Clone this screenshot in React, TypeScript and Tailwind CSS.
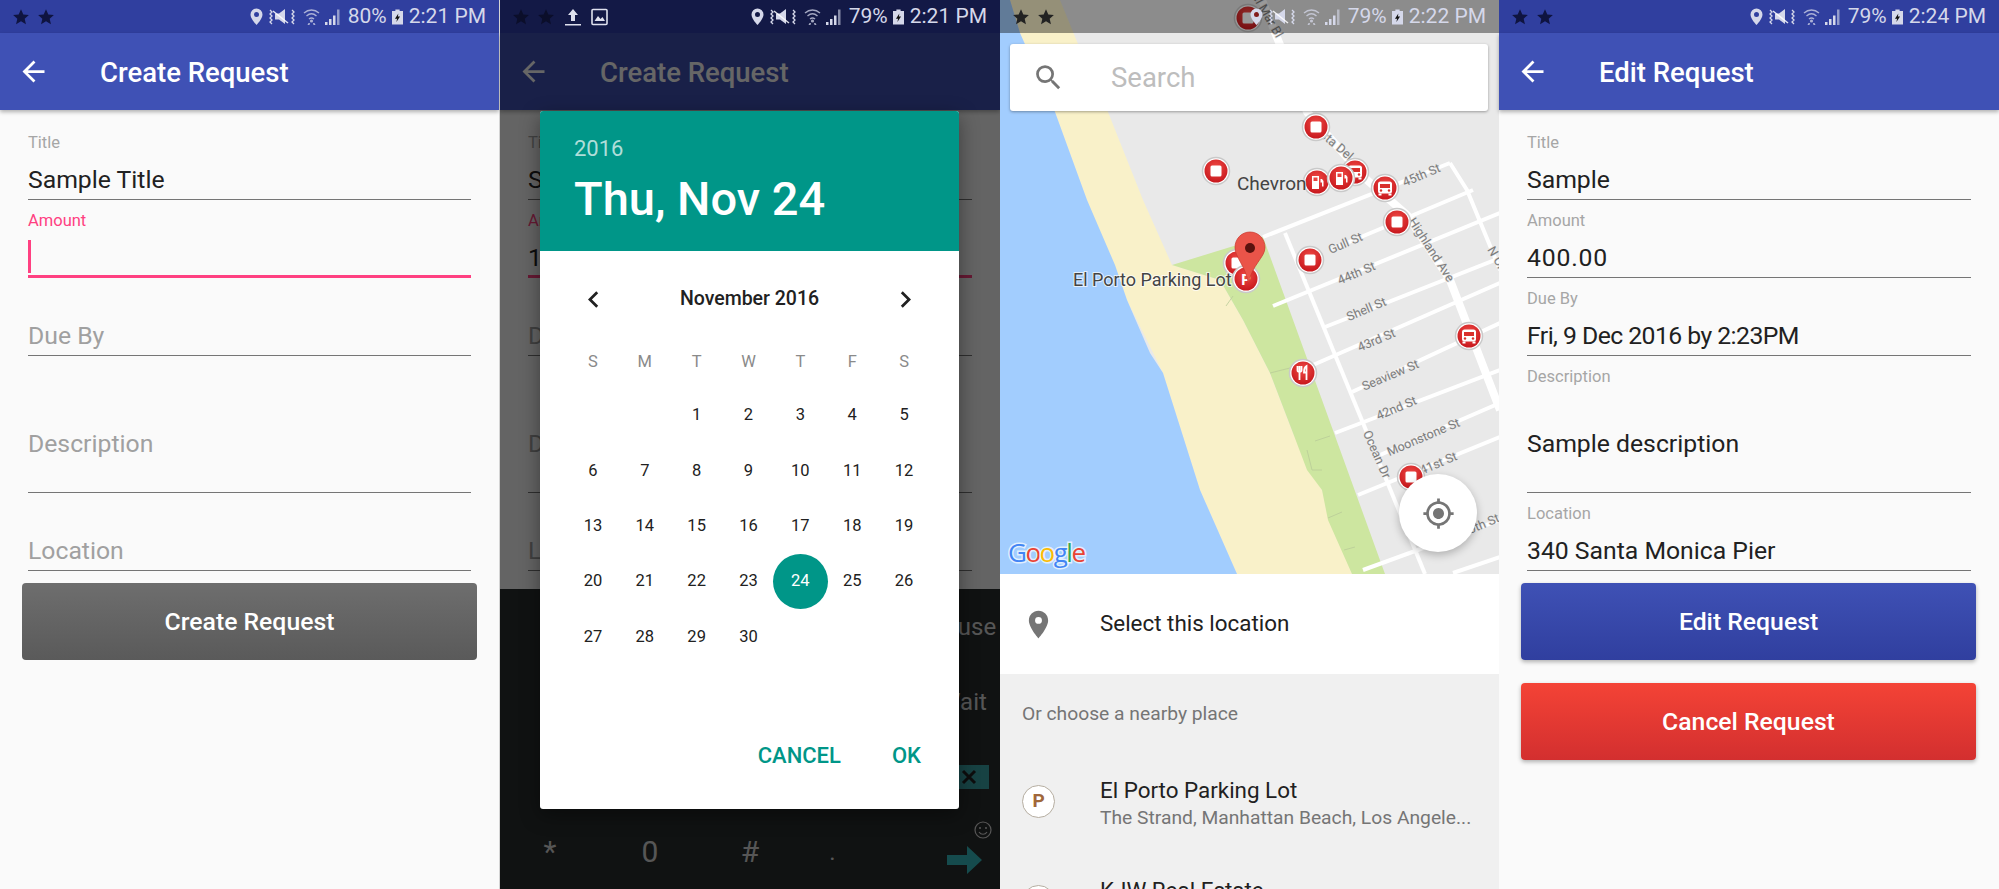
import React from 'react';

type FieldProps = { label: string; value?: string; tall?: boolean; focused?: boolean; valueClass?: string };

function Star() {
  return (
    <svg width="18" height="18" viewBox="0 0 24 24" fill="currentColor">
      <path d="M12 1.5l3.1 7 7.4.7-5.6 5 1.7 7.5-6.6-4-6.6 4 1.7-7.5-5.6-5 7.4-.7z" />
    </svg>
  );
}

function StatusIcons() {
  return (
    <svg width="92" height="33" viewBox="0 0 92 33" fill="currentColor" stroke="none">
      {/* location */}
      <path fillRule="evenodd" d="M6.5 8.5a6 6 0 0 0-6 6c0 4.5 6 10.5 6 10.5s6-6 6-10.500a6 6 0 0 0-6-6zm0 3.500a2.500 2.500 0 1 1 0 5 2.500 2.500 0 0 1 0-5z" />
      {/* vibrate off */}
      <path d="M25 13.500h4l6-4.500v15l-6-4.500h-4z" />
      <path d="M23 11l15 12" stroke="#fff" strokeOpacity="0.85" strokeWidth="1.500" />
      <path d="M20 10l2 2-2 2 2 2-2 2 2 2-2 2 2 2M42 10l2 2-2 2 2 2-2 2 2 2-2 2 2 2" fill="none" stroke="currentColor" strokeWidth="1.300" />
      {/* wifi */}
      <g fill="none" stroke="currentColor" strokeWidth="1.400" opacity="0.75">
        <path d="M54 13c4.500-4 10.500-4 15 0" />
        <path d="M56.500 16c3-2.600 7-2.600 10 0" />
        <path d="M59 19c1.600-1.300 3.400-1.300 5 0" />
      </g>
      <circle cx="61.500" cy="21" r="1.600" opacity="0.75" />
      <path d="M57.500 25l1-2h1.500l-.5 2zM65.500 25l-1-2H63l.5 2z" opacity="0.75" />
      {/* signal */}
      <path d="M75 22h2.500v3H75zM79 19h2.500v6H79zM83 15.500h2.500V25H83z" />
      <path d="M87 9.500h2.500V25H87z" opacity="0.6" />
    </svg>
  );
}

function Battery() {
  return (
    <svg width="11" height="18" viewBox="0 0 13 18">
      <path d="M4 0h5v2h4v16H0V2h4z" fill="currentColor" />
      <path d="M7.500 5L3.500 11h2.500l-.8 4 4.300-6.500H7z" fill="#111" />
    </svg>
  );
}

function StatusBar({ time, battery, bg, starColor, extras }: { time: string; battery: string; bg: string; starColor: string; extras?: boolean }) {
  return (
    <div className={`h-[33px] shrink-0 flex items-center justify-between pl-[12px] pr-[13px] text-[#d5d8ea] text-[21px] ${bg}`}>
      <div className="flex items-center gap-[8px]">
        <span className={`flex gap-[7px] ${starColor}`}>
          <Star />
          <Star />
        </span>
        {extras && (
          <>
            <svg width="20" height="18" viewBox="0 0 20 18" fill="#dfe1ee">
              <path d="M10 1l5 6h-3v6H8V7H5zM2 16h16v1.500H2z" />
            </svg>
            <svg width="17" height="18" viewBox="0 0 17 18">
              <rect x="1" y="1.500" width="15" height="15" rx="1" fill="none" stroke="#dfe1ee" strokeWidth="1.600" />
              <path d="M3.500 13l3.500-5 2.500 3 2-2 2.500 4z" fill="#dfe1ee" />
            </svg>
          </>
        )}
      </div>
      <div className="flex items-center">
        <StatusIcons />
        <span className="ml-[6px] leading-none">{battery}</span>
        <span className="ml-[5px] flex"><Battery /></span>
        <span className="ml-[6px] leading-none">{time}</span>
      </div>
    </div>
  );
}

function AppBar({ title }: { title: string }) {
  return (
    <div className="relative z-[5] h-[77px] shrink-0 bg-[#3f51b5] shadow-[0_2px_4px_rgba(0,0,0,0.3)] flex items-center text-white">
      <svg className="ml-[17px]" width="33" height="33" viewBox="0 0 24 24" fill="currentColor">
        <path d="M20 11H7.830l5.590-5.590L12 4l-8 8 8 8 1.410-1.410L7.830 13H20v-2z" />
      </svg>
      <span className="ml-[50px] pt-[3px] text-[27.5px] font-medium leading-none">{title}</span>
    </div>
  );
}

function Field({ label, value, tall, focused, valueClass }: FieldProps) {
  const lineColor = focused ? 'border-b-[3px] border-[#ff4081]' : 'border-b-[1.5px] border-[#757575]';
  return (
    <div className={`mx-[28px] flex flex-col ${tall ? 'h-[137px]' : 'h-[78px]'} ${lineColor}`}>
      {value !== undefined || focused ? (
        <>
          <div className={`mt-[12px] h-[18px] text-[16.5px] leading-[18px] ${focused ? 'text-[#ff4081]' : 'text-[#a6a6a6]'}`}>{label}</div>
          <div className={`${tall ? 'mt-[43px]' : 'mt-[13px]'} h-[30px] text-[24.75px] leading-[30px] text-[#212121] ${valueClass ?? ''}`}>
            {value}
            {focused && !value && <div className="-mt-[3px] w-[2.500px] h-[33px] bg-[#ff4081]" />}
          </div>
        </>
      ) : (
        <div className={`${tall ? 'mt-[73px]' : 'mt-[43px]'} h-[30px] text-[24.75px] leading-[30px] text-[#a0a0a0]`}>{label}</div>
      )}
    </div>
  );
}

function ActionButton({ label, gradient }: { label: string; gradient: string }) {
  return (
    <button className={`mx-[22px] w-[455px] h-[77px] rounded-[4px] text-white text-[24.75px] font-medium ${gradient}`}>
      {label}
    </button>
  );
}

function KeyLabel({ children }: { children: React.ReactNode }) {
  return <div className="flex-1 flex justify-end items-center"><span className="w-[74px] text-center text-[24px] text-[#d8d8d8]">{children}</span></div>;
}

function Keyboard() {
  return (
    <div className="h-[300px] shrink-0 bg-[#2a2d2d] flex flex-col">
      <KeyLabel>Pause</KeyLabel>
      <KeyLabel>Wait</KeyLabel>
      <div className="flex-1 flex justify-end items-center pr-[11px]">
        <div className="w-[46px] h-[24px] bg-[#3aa5a8] flex items-center justify-center pl-[6px] text-[#222]">
          <svg width="16" height="16" viewBox="0 0 16 16" fill="none" stroke="currentColor" strokeWidth="3">
            <path d="M2 2l12 12M14 2L2 14" />
          </svg>
        </div>
      </div>
      <div className="flex-1 grid grid-cols-[100px_100px_100px_65px_70px_65px] items-center text-center text-[#d8d8d8]">
        <span className="text-[30px]">*</span>
        <span className="text-[30px]">0</span>
        <span className="text-[30px]">#</span>
        <span className="text-[24px]">.</span>
        <span />
        <svg width="65" height="75" viewBox="0 0 65 75">
          <circle cx="48" cy="16" r="8" fill="none" stroke="#d8d8d8" strokeWidth="1.200" />
          <circle cx="45" cy="14" r="1" fill="#d8d8d8" />
          <circle cx="51" cy="14" r="1" fill="#d8d8d8" />
          <path d="M44 18c2 3 6 3 8 0" fill="none" stroke="#d8d8d8" strokeWidth="1.200" />
          <path d="M12 41h20v-9l15 14-15 14v-9H12z" fill="#35bcc0" />
        </svg>
      </div>
    </div>
  );
}

const DAY_NAMES = ['S', 'M', 'T', 'W', 'T', 'F', 'S'];
const DAYS = Array.from({ length: 30 }, (_, i) => i + 1);

function DatePicker() {
  return (
    <div className="absolute z-30 left-[40px] top-[111px] w-[419px] h-[698px] bg-white rounded-[3px] flex flex-col shadow-[0_6px_20px_rgba(0,0,0,0.4)]">
      <div className="h-[140px] bg-[#009688] rounded-t-[3px] pl-[34px] pt-[24px] text-white">
        <div className="text-[22px] leading-[28px] text-white/70">2016</div>
        <div className="mt-[7px] text-[47px] leading-[58px] font-medium">Thu, Nov 24</div>
      </div>
      <div className="ml-[27px] w-[363px]">
        <div className="h-[96px] pl-[10px] pr-[8px] flex items-center justify-between text-[#212121]">
          <svg width="33" height="33" viewBox="0 0 24 24" fill="currentColor"><path d="M15.410 7.410L14 6l-6 6 6 6 1.410-1.410L10.830 12z" /></svg>
          <span className="text-[19.500px] font-medium">November 2016</span>
          <svg width="33" height="33" viewBox="0 0 24 24" fill="currentColor"><path d="M10 6L8.590 7.410 13.170 12l-4.580 4.590L10 18l6-6z" /></svg>
        </div>
        <div className="grid grid-cols-7 h-[30px] items-center text-center text-[16.500px] text-[#8a8a8a]">
          {DAY_NAMES.map((d, i) => <span key={i}>{d}</span>)}
        </div>
        <div className="mt-[11px] grid grid-cols-7 auto-rows-[55.400px] text-[16.500px] text-[#212121]">
          <span />
          <span />
          {DAYS.map((d) => (
            <div key={d} className="flex items-center justify-center">
              {d === 24 ? (
                <span className="shrink-0 w-[55px] h-[55px] rounded-full bg-[#009688] text-white flex items-center justify-center">{d}</span>
              ) : d}
            </div>
          ))}
        </div>
      </div>
      <div className="mt-auto h-[108px] pr-[38px] flex items-center justify-end gap-[51px] text-[22px] font-medium text-[#009688]">
        <span>CANCEL</span>
        <span>OK</span>
      </div>
    </div>
  );
}

function Marker({ x, y, kind }: { x: number; y: number; kind: 'stop' | 'gas' | 'bus' | 'fork' | 'park' }) {
  return (
    <g transform={`translate(${x} ${y})`}>
      <circle r="13.500" fill="#fff" stroke="#c9c9c9" strokeWidth="1.500" />
      <circle r="11.500" fill="url(#pinRed)" />
      {kind === 'stop' && <rect x="-5.500" y="-5.500" width="11" height="11" rx="1.500" fill="#fff" />}
      {kind === 'gas' && (
        <g fill="#fff">
          <path d="M-5-6h7v13h-7zM-3.500-4.500v3.500h4v-3.500z" fillRule="evenodd" />
          <path d="M3.500-3h1.500l1.500 2v5.500h-1.500v-4h-1.500z" />
        </g>
      )}
      {kind === 'bus' && (
        <g>
          <rect x="-7" y="-6.500" width="14" height="12" rx="2.500" fill="#fff" />
          <rect x="-5" y="-4" width="10" height="4" fill="#d9302c" />
          <circle cx="-4" cy="2.500" r="1.200" fill="#d9302c" />
          <circle cx="4" cy="2.500" r="1.200" fill="#d9302c" />
          <path d="M-6.500 5.500h3v2h-3zM3.500 5.500h3v2h-3z" fill="#fff" />
        </g>
      )}
      {kind === 'fork' && (
        <g fill="none" stroke="#fff" strokeWidth="1.800">
          <path d="M-3.500-7v14M-5.500-7v4.500c0 1 1 1.500 2 1.500s2-.5 2-1.500V-7" />
          <path d="M3.500 7V-7c-2 1-2.500 3.500-2.500 6.500h2.500" />
        </g>
      )}
      {kind === 'park' && <text x="0" y="5.500" textAnchor="middle" fontSize="15" fontWeight="700" fill="#fff">P</text>}
    </g>
  );
}

const STREETS = [
  'M263 237L450 163',
  'M330 250L473 190',
  'M273 306L500 213',
  'M325 327L500 258',
  'M313 365L500 283',
  'M352 392L500 323',
  'M335 433L500 370',
  'M380 455L500 403',
  'M358 495L500 437',
  'M363 570L500 520',
  'M453 573L500 557',
];

const STREET_LABELS = [
  { t: '45th St', x: 423, y: 179, r: -23 },
  { t: 'Gull St', x: 347, y: 247, r: -23 },
  { t: '44th St', x: 358, y: 277, r: -23 },
  { t: 'Shell St', x: 368, y: 313, r: -23 },
  { t: '43rd St', x: 378, y: 344, r: -23 },
  { t: 'Seaview St', x: 392, y: 379, r: -23 },
  { t: '42nd St', x: 398, y: 412, r: -23 },
  { t: 'Moonstone St', x: 425, y: 441, r: -23 },
  { t: '41st St', x: 440, y: 467, r: -23 },
  { t: '40th St', x: 482, y: 529, r: -23 },
  { t: 'Highland Ave', x: 428, y: 252, r: 57 },
  { t: 'Ocean Dr', x: 373, y: 456, r: 66 },
  { t: 'Vista Del', x: 330, y: 145, r: 40 },
  { t: 'Del Mar Bl', x: 262, y: 14, r: 60 },
  { t: 'N Cr', x: 493, y: 260, r: 60 },
];

function MapCanvas() {
  return (
    <svg className="block [font-family:Roboto,sans-serif]" width="499" height="574" viewBox="0 0 499 574">
      <defs>
        <radialGradient id="pinRed" cx="50%" cy="35%" r="70%">
          <stop offset="0%" stopColor="#f04a45" />
          <stop offset="100%" stopColor="#c4141a" />
        </radialGradient>
      </defs>
      <rect width="500" height="574" fill="#e9e9e9" />
      <path d="M0 0H60L78 44 108 112 143 200 172 265 220 280 243 320 270 373 293 433 322 490 352 574H237L200 490 163 373 127 300 87 200 55 112 20 33 10 0Z" fill="#f9f1c9" />
      <path d="M0 0H10L20 33 55 112 87 200 115 265 127 300 150 353 163 373 200 490 237 574H0Z" fill="#a2cdfe" />
      <path d="M172 265L263 237 385 574H352L328 520 322 490 307 470 293 433 270 373 243 320 220 280Z" fill="#cde6a0" />
      <path d="M270 373L290 368M233 296L226 306M315 441L330 436M307 450L312 470 322 470M328 518L342 512M344 550L355 547" fill="none" stroke="#b9cb98" strokeWidth="0.800" />
      <g fill="none" stroke="#fff" strokeWidth="4" strokeLinejoin="round">
        {STREETS.map((d) => <path key={d} d={d} />)}
        <path d="M285 233L425 574" />
        <path d="M450 163L467 190 500 270" />
        <path d="M262 0L307 112 367 180 407 215 450 280 500 410" strokeWidth="8" />
      </g>
      <g fill="#7c7c7c" fontSize="12.500" textAnchor="middle">
        {STREET_LABELS.map((l) => (
          <text key={l.t} transform={`translate(${l.x} ${l.y}) rotate(${l.r})`} stroke="#e9e9e9" strokeWidth="1.500" paintOrder="stroke">{l.t}</text>
        ))}
      </g>
      <Marker x={248} y={18} kind="stop" />
      <Marker x={316} y={127} kind="stop" />
      <Marker x={216} y={171} kind="stop" />
      <Marker x={355} y={172} kind="bus" />
      <Marker x={317} y={182} kind="gas" />
      <Marker x={341} y={178} kind="gas" />
      <Marker x={385} y={188} kind="bus" />
      <Marker x={397} y={222} kind="stop" />
      <Marker x={310} y={260} kind="stop" />
      <Marker x={237} y={263} kind="stop" />
      <Marker x={246} y={279} kind="park" />
      <Marker x={469} y={336} kind="bus" />
      <Marker x={303} y={373} kind="fork" />
      <Marker x={411} y={477} kind="stop" />
      <text x="237" y="190" fontSize="19" fill="#444" stroke="#e9e9e9" strokeWidth="1.500" paintOrder="stroke">Chevron</text>
      <text x="73" y="286" fontSize="18" fill="#444" stroke="#fff" strokeOpacity="0.7" strokeWidth="2" paintOrder="stroke">El Porto Parking Lot</text>
      <path d="M250 232c-8.500 0-15 6.800-15 15.500 0 10 10 17 13.500 36 3.500-19 16.500-26 16.500-36 0-8.700-6.500-15.500-15-15.500z" fill="#ea5449" stroke="#c9362d" strokeWidth="0.700" />
      <circle cx="250" cy="248" r="5" fill="#5a120e" />
      <text x="8" y="562" fontSize="26" fontFamily="Open Sans, sans-serif" stroke="#fff" strokeOpacity="0.7" strokeWidth="3" paintOrder="stroke" letterSpacing="-1.500">
        <tspan fill="#4285f4">G</tspan>
        <tspan fill="#ea4335">o</tspan>
        <tspan fill="#fbbc05">o</tspan>
        <tspan fill="#4285f4">g</tspan>
        <tspan fill="#34a853">l</tspan>
        <tspan fill="#ea4335">e</tspan>
      </text>
    </svg>
  );
}

function CreateScreen() {
  return (
    <div className="w-[500px] h-full bg-[#fafafa] flex flex-col border-r border-[#d4d4d4]">
      <StatusBar time="2:21 PM" battery="80%" bg="bg-[#303f9f]" starColor="text-[#0f1440]" />
      <AppBar title="Create Request" />
      <div className="pt-[12px]">
        <Field label="Title" value="Sample Title" />
        <Field label="Amount" focused />
        <Field label="Due By" />
        <Field label="Description" tall />
        <Field label="Location" />
      </div>
      <div className="mt-[12px]">
        <ActionButton label="Create Request" gradient="bg-gradient-to-b from-[#6e6e6e] to-[#5a5a5a]" />
      </div>
    </div>
  );
}

function PickerScreen() {
  return (
    <div className="relative w-[500px] h-full flex flex-col overflow-hidden">
      <div className="relative z-20">
        <StatusBar time="2:21 PM" battery="79%" bg="bg-[#131946]" starColor="text-[#0b0e2a]" extras />
      </div>
      <AppBar title="Create Request" />
      <div className="flex-1 min-h-0 bg-[#fafafa] pt-[12px]">
        <Field label="Title" value="Sample Title" />
        <Field label="Amount" value="1" focused />
        <Field label="Due By" />
        <Field label="Description" tall />
        <Field label="Location" />
      </div>
      <Keyboard />
      <div className="absolute inset-x-0 top-[33px] bottom-0 z-10 bg-black/60" />
      <DatePicker />
    </div>
  );
}

function PlaceRow({ title, subtitle, className, letter }: { title: string; subtitle?: string; className?: string; letter?: string }) {
  return (
    <div className={`flex pl-[22px] items-start ${className ?? ''}`}>
      <div className="mt-[9px] shrink-0 w-[33px] h-[33px] rounded-full bg-white border-[1.500px] border-[#b5ada0] flex items-center justify-center text-[19px] font-bold text-[#a0673a]">
        {letter}
      </div>
      <div className="ml-[45px]">
        <div className="text-[22.400px] leading-[28px] text-[#212121]">{title}</div>
        {subtitle && <div className="text-[19.250px] leading-[27px] text-[#757575] whitespace-nowrap">{subtitle}</div>}
      </div>
    </div>
  );
}

function MapScreen() {
  return (
    <div className="w-[499px] h-full bg-[#f0f0f0] flex flex-col overflow-hidden">
      <div className="relative h-[574px] shrink-0">
        <MapCanvas />
        <div className="absolute inset-x-0 top-0">
          <StatusBar time="2:22 PM" battery="79%" bg="bg-black/40" starColor="text-[#222]" />
        </div>
        <div className="absolute left-[10px] top-[44px] w-[478px] h-[67px] bg-white rounded-[3px] shadow-[0_1px_3px_rgba(0,0,0,0.35)] flex items-center">
          <svg className="ml-[22px]" width="33" height="33" viewBox="0 0 24 24" fill="#757575">
            <path d="M15.500 14h-.790l-.280-.270A6.471 6.471 0 0 0 16 9.500 6.500 6.500 0 1 0 9.500 16c1.610 0 3.090-.590 4.230-1.570l.270.280v.790l5 4.990L20.490 19l-4.990-5zm-6 0C7.010 14 5 11.990 5 9.500S7.010 5 9.500 5 14 7.010 14 9.500 11.990 14 9.500 14z" />
          </svg>
          <span className="ml-[46px] text-[27.500px] text-[#bdbdbd]">Search</span>
        </div>
        <div className="absolute left-[399px] top-[474px] w-[78px] h-[78px] rounded-full bg-white shadow-[0_3px_8px_rgba(0,0,0,0.25)] flex items-center justify-center">
          <svg width="33" height="33" viewBox="0 0 24 24" fill="#757575">
            <path d="M12 8c-2.210 0-4 1.790-4 4s1.790 4 4 4 4-1.790 4-4-1.790-4-4-4zm8.940 3A8.994 8.994 0 0 0 13 3.060V1h-2v2.060A8.994 8.994 0 0 0 3.060 11H1v2h2.060A8.994 8.994 0 0 0 11 20.940V23h2v-2.060A8.994 8.994 0 0 0 20.940 13H23v-2h-2.060zM12 19c-3.870 0-7-3.130-7-7s3.130-7 7-7 7 3.130 7 7-3.130 7-7 7z" />
          </svg>
        </div>
      </div>
      <div className="h-[100px] shrink-0 bg-white flex items-center">
        <svg className="ml-[22px]" width="33" height="33" viewBox="0 0 24 24" fill="#757575">
          <path d="M12 2C8.130 2 5 5.130 5 9c0 5.250 7 13 7 13s7-7.750 7-13c0-3.870-3.130-7-7-7zm0 9.500a2.500 2.500 0 0 1 0-5 2.500 2.500 0 0 1 0 5z" />
        </svg>
        <span className="ml-[45px] text-[22.400px] text-[#212121]">Select this location</span>
      </div>
      <div className="pl-[22px] pt-[27px] text-[19.250px] leading-[26px] text-[#757575]">Or choose a nearby place</div>
      <PlaceRow title="El Porto Parking Lot" subtitle="The Strand, Manhattan Beach, Los Angele..." className="mt-[49px] -mb-[2px]" letter="P" />
      <PlaceRow title="KJW Real Estate" className="mt-[47px]" />
    </div>
  );
}

function EditScreen() {
  return (
    <div className="w-[500px] h-full bg-[#fafafa] flex flex-col">
      <StatusBar time="2:24 PM" battery="79%" bg="bg-[#303f9f]" starColor="text-[#0f1440]" />
      <AppBar title="Edit Request" />
      <div className="pt-[12px]">
        <Field label="Title" value="Sample" />
        <Field label="Amount" value="400.00" valueClass="tracking-[0.8px]" />
        <Field label="Due By" value="Fri, 9 Dec 2016 by 2:23PM" valueClass="tracking-[-0.55px]" />
        <Field label="Description" value="Sample description" tall />
        <Field label="Location" value="340 Santa Monica Pier" />
      </div>
      <div className="mt-[12px] flex flex-col gap-[23px]">
        <ActionButton label="Edit Request" gradient="bg-gradient-to-b from-[#3f51b5] to-[#303f9f] shadow-[0_2px_4px_rgba(0,0,0,0.3)]" />
        <ActionButton label="Cancel Request" gradient="bg-gradient-to-b from-[#f44336] to-[#d32f2f] shadow-[0_2px_4px_rgba(0,0,0,0.3)]" />
      </div>
    </div>
  );
}

export default function App() {
  return (
    <div className="flex w-[1999px] h-[889px] overflow-hidden bg-white [font-family:Roboto,sans-serif]">
      <CreateScreen />
      <PickerScreen />
      <MapScreen />
      <EditScreen />
    </div>
  );
}
